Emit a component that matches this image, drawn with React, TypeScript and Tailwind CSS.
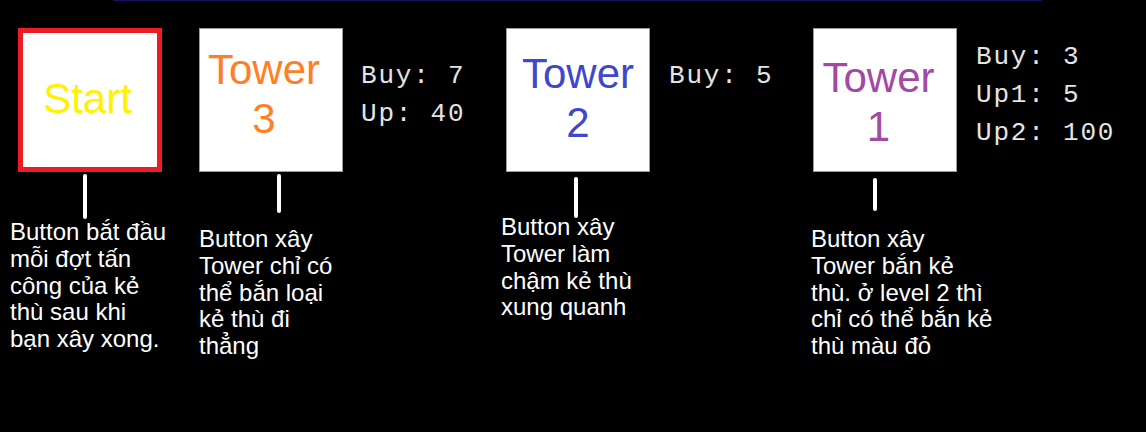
import React from "react";

const mono = { fontFamily: '"Liberation Mono", "Courier New", monospace' };
const sans = { fontFamily: '"Liberation Sans", Arial, sans-serif' };

function Stats({ lines, className }: { lines: string[]; className: string }) {
  return (
    <div className={`text-[26px] tracking-[1.8px] leading-[38px] text-[#e4e4e4] whitespace-pre ${className}`} style={mono}>
      {lines.map((l, i) => (
        <div key={i}>{l}</div>
      ))}
    </div>
  );
}

function TowerBox({ label, num, color, pad }: { label: string; num: string; color: string; pad: string }) {
  return (
    <div className={`w-[144px] h-[144px] shrink-0 bg-white border border-[#9a9a9a] flex flex-col items-center text-[42px] leading-[49px] ${pad} ${color}`} style={sans}>
      <div>{label}</div>
      <div>{num}</div>
    </div>
  );
}

function Desc({ lines, className }: { lines: string[]; className: string }) {
  return (
    <div className={`text-white text-[24px] leading-[26.8px] whitespace-nowrap ${className}`} style={sans}>
      {lines.map((l, i) => (
        <div key={i}>{l}</div>
      ))}
    </div>
  );
}

export default function App() {
  return (
    <div className="w-[1146px] h-[432px] bg-black overflow-hidden">
      <div className="ml-[113px] w-[929px] h-px bg-[#12125e]" />
      <div className="flex items-start mt-[27px]">
        <div className="ml-[18px] w-[144px] h-[144px] shrink-0 bg-white border-[5px] border-[#ec1c24] flex items-center justify-center pb-[4px] pr-[5px] text-[42px] text-[#fff200]" style={sans}>
          Start
        </div>
        <div className="ml-[37px]">
          <TowerBox label="Tower" num="3" color="text-[#ff7f27]" pad="pt-[16px] pr-[14px]" />
        </div>
        <Stats lines={["Buy: 7", "Up: 40"]} className="ml-[18px] w-[145px] mt-[29px]" />
        <TowerBox label="Tower" num="2" color="text-[#3f48cc]" pad="pt-[20px]" />
        <Stats lines={["Buy: 5"]} className="ml-[19px] w-[144px] mt-[29px]" />
        <TowerBox label="Tower" num="1" color="text-[#a349a4]" pad="pt-[24px] pr-[13px]" />
        <Stats lines={["Buy: 3", "Up1: 5", "Up2: 100"]} className="ml-[19px] mt-[10px]" />
      </div>
      <div className="flex items-start">
        <div className="ml-[10px] w-[189px] flex flex-col items-start">
          <div className="ml-[73px] mt-[2px] w-[4px] h-[45px] rounded-full bg-white" />
          <Desc lines={["Button bắt đầu", "mỗi đợt tấn", "công của kẻ", "thù sau khi", "bạn xây xong."]} className="mt-0" />
        </div>
        <div className="w-[302px] flex flex-col items-start">
          <div className="ml-[78px] mt-[2px] w-[4px] h-[39px] rounded-full bg-white" />
          <Desc lines={["Button xây", "Tower chỉ có", "thể bắn loại", "kẻ thù đi", "thẳng"]} className="mt-[13px]" />
        </div>
        <div className="w-[310px] flex flex-col items-start">
          <div className="ml-[73px] mt-[5px] w-[4px] h-[41px] rounded-full bg-white" />
          <Desc lines={["Button xây", "Tower làm", "chậm kẻ thù", "xung quanh"]} className="mt-[-4px]" />
        </div>
        <div className="flex flex-col items-start">
          <div className="ml-[62px] mt-[6px] w-[4px] h-[33px] rounded-full bg-white" />
          <Desc lines={["Button xây", "Tower bắn kẻ", "thù. ở level 2 thì", "chỉ có thể bắn kẻ", "thù màu đỏ"]} className="mt-[15px]" />
        </div>
      </div>
    </div>
  );
}
